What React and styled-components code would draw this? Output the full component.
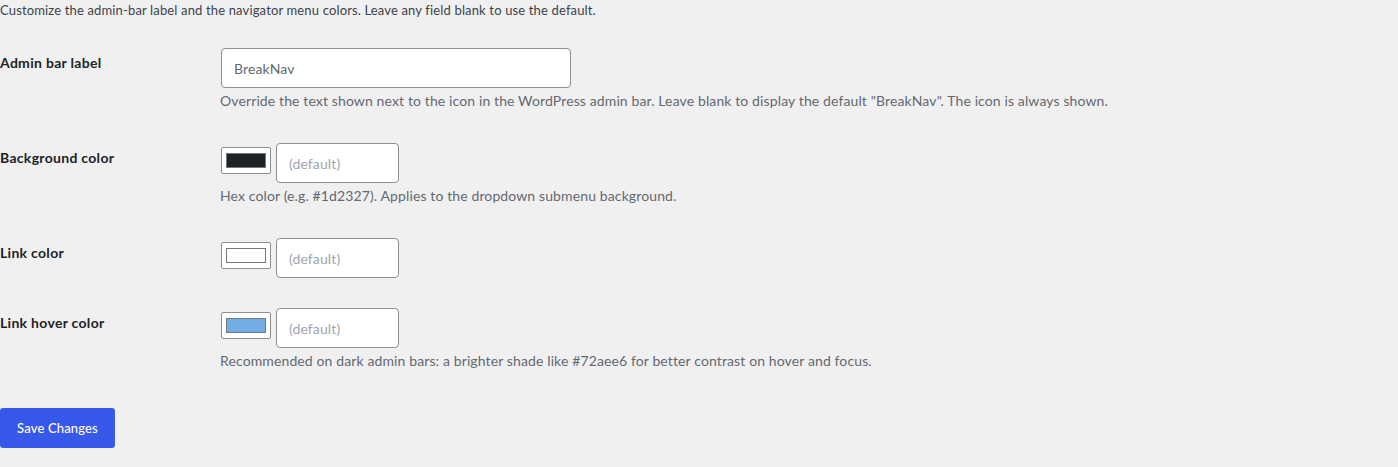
import React, { useState } from 'react'
import styled, { createGlobalStyle } from 'styled-components'

const GlobalStyle = createGlobalStyle`
  html, body {
    margin: 0;
    padding: 0;
    background: #f0f0f1;
  }
  body {
    font-family: Lato, "Liberation Sans", sans-serif;
    color: #1d2327;
  }
`

const fields = [
  {
    id: 'label',
    label: 'Admin bar label',
    type: 'text',
    placeholder: 'BreakNav',
    desc: 'Override the text shown next to the icon in the WordPress admin bar. Leave blank to display the default "BreakNav". The icon is always shown.',
  },
  {
    id: 'bg',
    label: 'Background color',
    type: 'color',
    swatch: '#1d2327',
    desc: 'Hex color (e.g. #1d2327). Applies to the dropdown submenu background.',
  },
  {
    id: 'link',
    label: 'Link color',
    type: 'color',
    swatch: '#ffffff',
  },
  {
    id: 'hover',
    label: 'Link hover color',
    type: 'color',
    swatch: '#72aee6',
    desc: 'Recommended on dark admin bars: a brighter shade like #72aee6 for better contrast on hover and focus.',
  },
]

const App = () => {
  const [values, setValues] = useState({})

  const handleChange = (id) => (e) => {
    setValues({ ...values, [id]: e.target.value })
  }

  return (
    <Page>
      <GlobalStyle />
      <Intro>
        Customize the admin-bar label and the navigator menu colors. Leave any field blank to use the default.
      </Intro>

      <Form onSubmit={(e) => e.preventDefault()}>
        {fields.map((f) => (
          <Row key={f.id}>
            <Label htmlFor={f.id}>{f.label}</Label>
            <Field>
              {f.type === 'text' ? (
                <TextInput
                  id={f.id}
                  placeholder={f.placeholder}
                  value={values[f.id] || ''}
                  onChange={handleChange(f.id)}
                />
              ) : (
                <ColorLine>
                  <Swatch type="button">
                    <SwatchFill color={f.swatch} />
                  </Swatch>
                  <HexInput
                    id={f.id}
                    placeholder="(default)"
                    value={values[f.id] || ''}
                    onChange={handleChange(f.id)}
                  />
                </ColorLine>
              )}
              {f.desc && <Description>{f.desc}</Description>}
            </Field>
          </Row>
        ))}

        <Submit>
          <SaveButton type="submit">Save Changes</SaveButton>
        </Submit>
      </Form>
    </Page>
  )
}

export default App

const Page = styled.div`
  padding: 0;
`

const Intro = styled.p`
  margin: 0 0 13px;
  font-size: 13px;
  line-height: 20px;
  letter-spacing: 0.15px;
  color: #3c434a;
`

const Form = styled.form`
  display: flex;
  flex-direction: column;
`

const Row = styled.div`
  display: grid;
  grid-template-columns: 221px 1fr;
`

const Label = styled.label`
  padding: 21px 0 19px;
  font-size: 14px;
  font-weight: 700;
  line-height: 18px;
  letter-spacing: 0.3px;
  color: #1d2327;
`

const Field = styled.div`
  padding: 15px 0;
  display: flex;
  flex-direction: column;
  align-items: flex-start;
`

const inputBase = `
  box-sizing: border-box;
  height: 40px;
  padding: 0 12px;
  border: 1px solid #8c8f94;
  border-radius: 4px;
  background: #fff;
  font-family: Lato, "Liberation Sans", sans-serif;
  font-size: 14px;
  letter-spacing: 0.12px;
  color: #2c3338;
  outline: none;
`

const TextInput = styled.input`
  ${inputBase}
  width: 350px;
  &::placeholder {
    color: #646970;
  }
`

const ColorLine = styled.div`
  display: flex;
  align-items: flex-start;
  gap: 5px;
`

const Swatch = styled.button`
  box-sizing: border-box;
  width: 50px;
  height: 27px;
  margin-top: 4px;
  padding: 5px 4px 5px;
  border: 1px solid #8c8f94;
  border-radius: 2px;
  background: #fff;
  cursor: pointer;
  display: flex;
`

const SwatchFill = styled.span`
  flex: 1;
  border: 1px solid #777;
  background: ${(p) => p.color};
`

const HexInput = styled.input`
  ${inputBase}
  width: 123px;
  &::placeholder {
    color: #a0a5aa;
  }
`

const Description = styled.p`
  margin: 2px 0 2px -1px;
  font-size: 14px;
  line-height: 21px;
  letter-spacing: 0.12px;
  color: #646970;
`

const Submit = styled.p`
  margin: 0;
  padding: 20px 0;
`

const SaveButton = styled.button`
  box-sizing: border-box;
  height: 40px;
  width: 115px;
  padding: 0;
  border: 0;
  border-radius: 3px;
  background: #3858e9;
  color: #fff;
  font-family: Lato, "Liberation Sans", sans-serif;
  font-size: 13px;
  font-weight: 500;
  letter-spacing: 0.15px;
  cursor: pointer;
`
